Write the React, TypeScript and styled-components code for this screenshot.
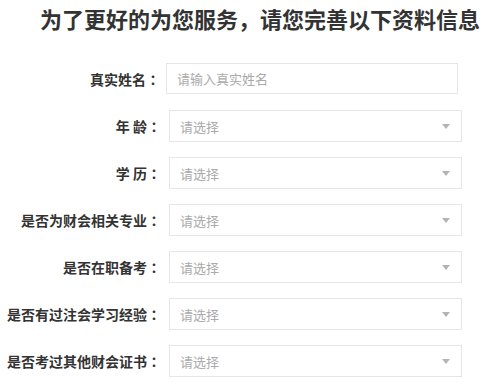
import React from "react";
import styled, { createGlobalStyle } from "styled-components";

const GlobalStyle = createGlobalStyle`
  html, body {
    margin: 0;
    padding: 0;
    background: #fff;
  }
  body {
    font-family: "Noto Sans CJK SC", "Noto Sans", sans-serif;
    color: #333;
  }
`;

const Page = styled.div`
  width: 500px;
  overflow: hidden;
`;

const Title = styled.h2`
  margin: 0;
  padding: 3px 0 0 40px;
  font-size: 22px;
  line-height: 31px;
  font-weight: bold;
  color: #333;
  white-space: nowrap;
`;

const Form = styled.form`
  display: flex;
  flex-direction: column;
  margin-top: 29px;
`;

const Row = styled.div<{ $gap: number }>`
  display: flex;
  align-items: center;
  margin-bottom: ${(p) => p.$gap}px;
`;

const Label = styled.label<{ $offset?: number }>`
  width: ${(p) => 161 - (p.$offset ?? 0)}px;
  flex-shrink: 0;
  text-align: right;
  font-size: 14px;
  font-weight: bold;
  color: #333;
  white-space: nowrap;
`;

// centred full-width colon, as the original font draws it
const Colon = styled.span`
  font-family: "Noto Sans CJK TC", "Noto Sans CJK SC", sans-serif;
`;

const TextInput = styled.input`
  box-sizing: border-box;
  margin-left: 6px;
  width: 292px;
  height: 31px;
  padding: 0 10px;
  border: 1px solid #e6e6e6;
  outline: none;
  font-family: inherit;
  font-size: 13px;
  color: #333;

  &::placeholder {
    color: #aaa;
  }
`;

const Select = styled.div`
  box-sizing: border-box;
  margin-left: 8px;
  width: 293px;
  height: 32px;
  padding: 0 11px 0 10px;
  border: 1px solid #e6e6e6;
  display: flex;
  align-items: center;
  justify-content: space-between;
  font-size: 13px;
  color: #aaa;
  cursor: pointer;
`;

const Arrow = styled.span`
  width: 0;
  height: 0;
  border-left: 4px solid transparent;
  border-right: 4px solid transparent;
  border-top: 5px solid #b4b4b4;
`;

const selects = [
  "年 龄",
  "学 历",
  "是否为财会相关专业",
  "是否在职备考",
  "是否有过注会学习经验",
  "是否考过其他财会证书",
];

export default function App() {
  return (
    <Page>
      <GlobalStyle />
      <Title>为了更好的为您服务，请您完善以下资料信息</Title>
      <Form>
        <Row $gap={16}>
          <Label $offset={1}>
            真实姓名<Colon>：</Colon>
          </Label>
          <TextInput placeholder="请输入真实姓名" />
        </Row>
        {selects.map((label) => (
          <Row key={label} $gap={15}>
            <Label>
              {label}
              <Colon>：</Colon>
            </Label>
            <Select>
              <span>请选择</span>
              <Arrow />
            </Select>
          </Row>
        ))}
      </Form>
    </Page>
  );
}
